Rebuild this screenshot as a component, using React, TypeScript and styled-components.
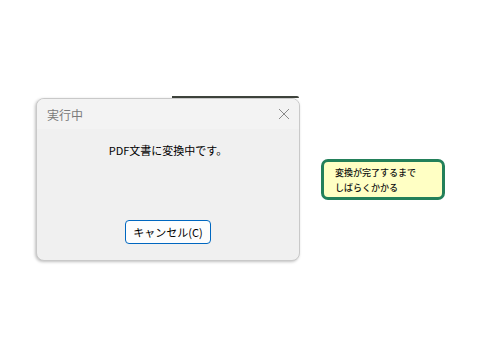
import React from 'react';
import styled, { createGlobalStyle } from 'styled-components';

const GlobalStyle = createGlobalStyle`
  html, body {
    margin: 0;
    padding: 0;
    background: #ffffff;
  }
  body {
    font-family: "Noto Sans CJK JP", "Noto Sans", sans-serif;
  }
`;

const Page = styled.div`
  width: 480px;
  height: 360px;
  box-sizing: border-box;
  padding: 98px 0 0 36px;
  display: flex;
  align-items: flex-start;
  gap: 21px;
`;

const DialogWrap = styled.div`
  position: relative;
`;

// the edge of whatever window sits behind the dialog
const BackEdge = styled.div`
  position: absolute;
  top: -2px;
  left: 136px;
  width: 127px;
  height: 2px;
  background: #3f443d;
  border-radius: 0 4px 0 0;
`;

const Dialog = styled.div`
  position: relative;
  width: 264px;
  height: 163px;
  box-sizing: border-box;
  border: 1px solid #c9c9c9;
  border-radius: 8px;
  overflow: hidden;
  background: #f0f0f0;
  display: flex;
  flex-direction: column;
  box-shadow: -1px 1px 3px rgba(0, 0, 0, 0.25);
`;

const TitleBar = styled.div`
  height: 30px;
  flex: none;
  display: flex;
  align-items: center;
  justify-content: space-between;
  padding: 0 9px 0 10px;
  background: #f3f3f3;
`;

const Title = styled.span`
  font-size: 12px;
  color: #7a7a7a;
`;

const CloseButton = styled.span`
  display: flex;
  width: 12px;
  height: 12px;
`;

const Body = styled.div`
  flex: 1;
  display: flex;
  flex-direction: column;
  align-items: center;
  padding-top: 13px;
`;

const Message = styled.p`
  margin: 0;
  font-size: 11px;
  line-height: 16px;
  color: #000;
`;

const CancelButton = styled.button`
  margin-top: 62px;
  width: 86px;
  height: 24px;
  box-sizing: border-box;
  border: 1px solid #0067c0;
  border-radius: 4px;
  background: #fdfdfd;
  font-family: inherit;
  font-size: 11px;
  color: #000;
  padding: 0;
`;

const Note = styled.div`
  margin-top: 61px;
  width: 124px;
  height: 41px;
  box-sizing: border-box;
  border: 3px solid #23805a;
  border-radius: 7px;
  background: #ffffc4;
  padding: 3px 0 0 11px;
  font-size: 9px;
  font-weight: 500;
  line-height: 15px;
  color: #111;
`;

export default function App() {
  return (
    <>
      <GlobalStyle />
      <Page>
        <DialogWrap>
          <BackEdge />
          <Dialog>
            <TitleBar>
              <Title>実行中</Title>
              <CloseButton>
                <svg width="12" height="12" viewBox="0 0 12 12">
                  <path d="M1 1L11 11M11 1L1 11" stroke="#8a8a8a" strokeWidth="1" fill="none" />
                </svg>
              </CloseButton>
            </TitleBar>
            <Body>
              <Message>PDF文書に変換中です。</Message>
              <CancelButton>キャンセル(C)</CancelButton>
            </Body>
          </Dialog>
        </DialogWrap>
        <Note>
          変換が完了するまで
          <br />
          しばらくかかる
        </Note>
      </Page>
    </>
  );
}
